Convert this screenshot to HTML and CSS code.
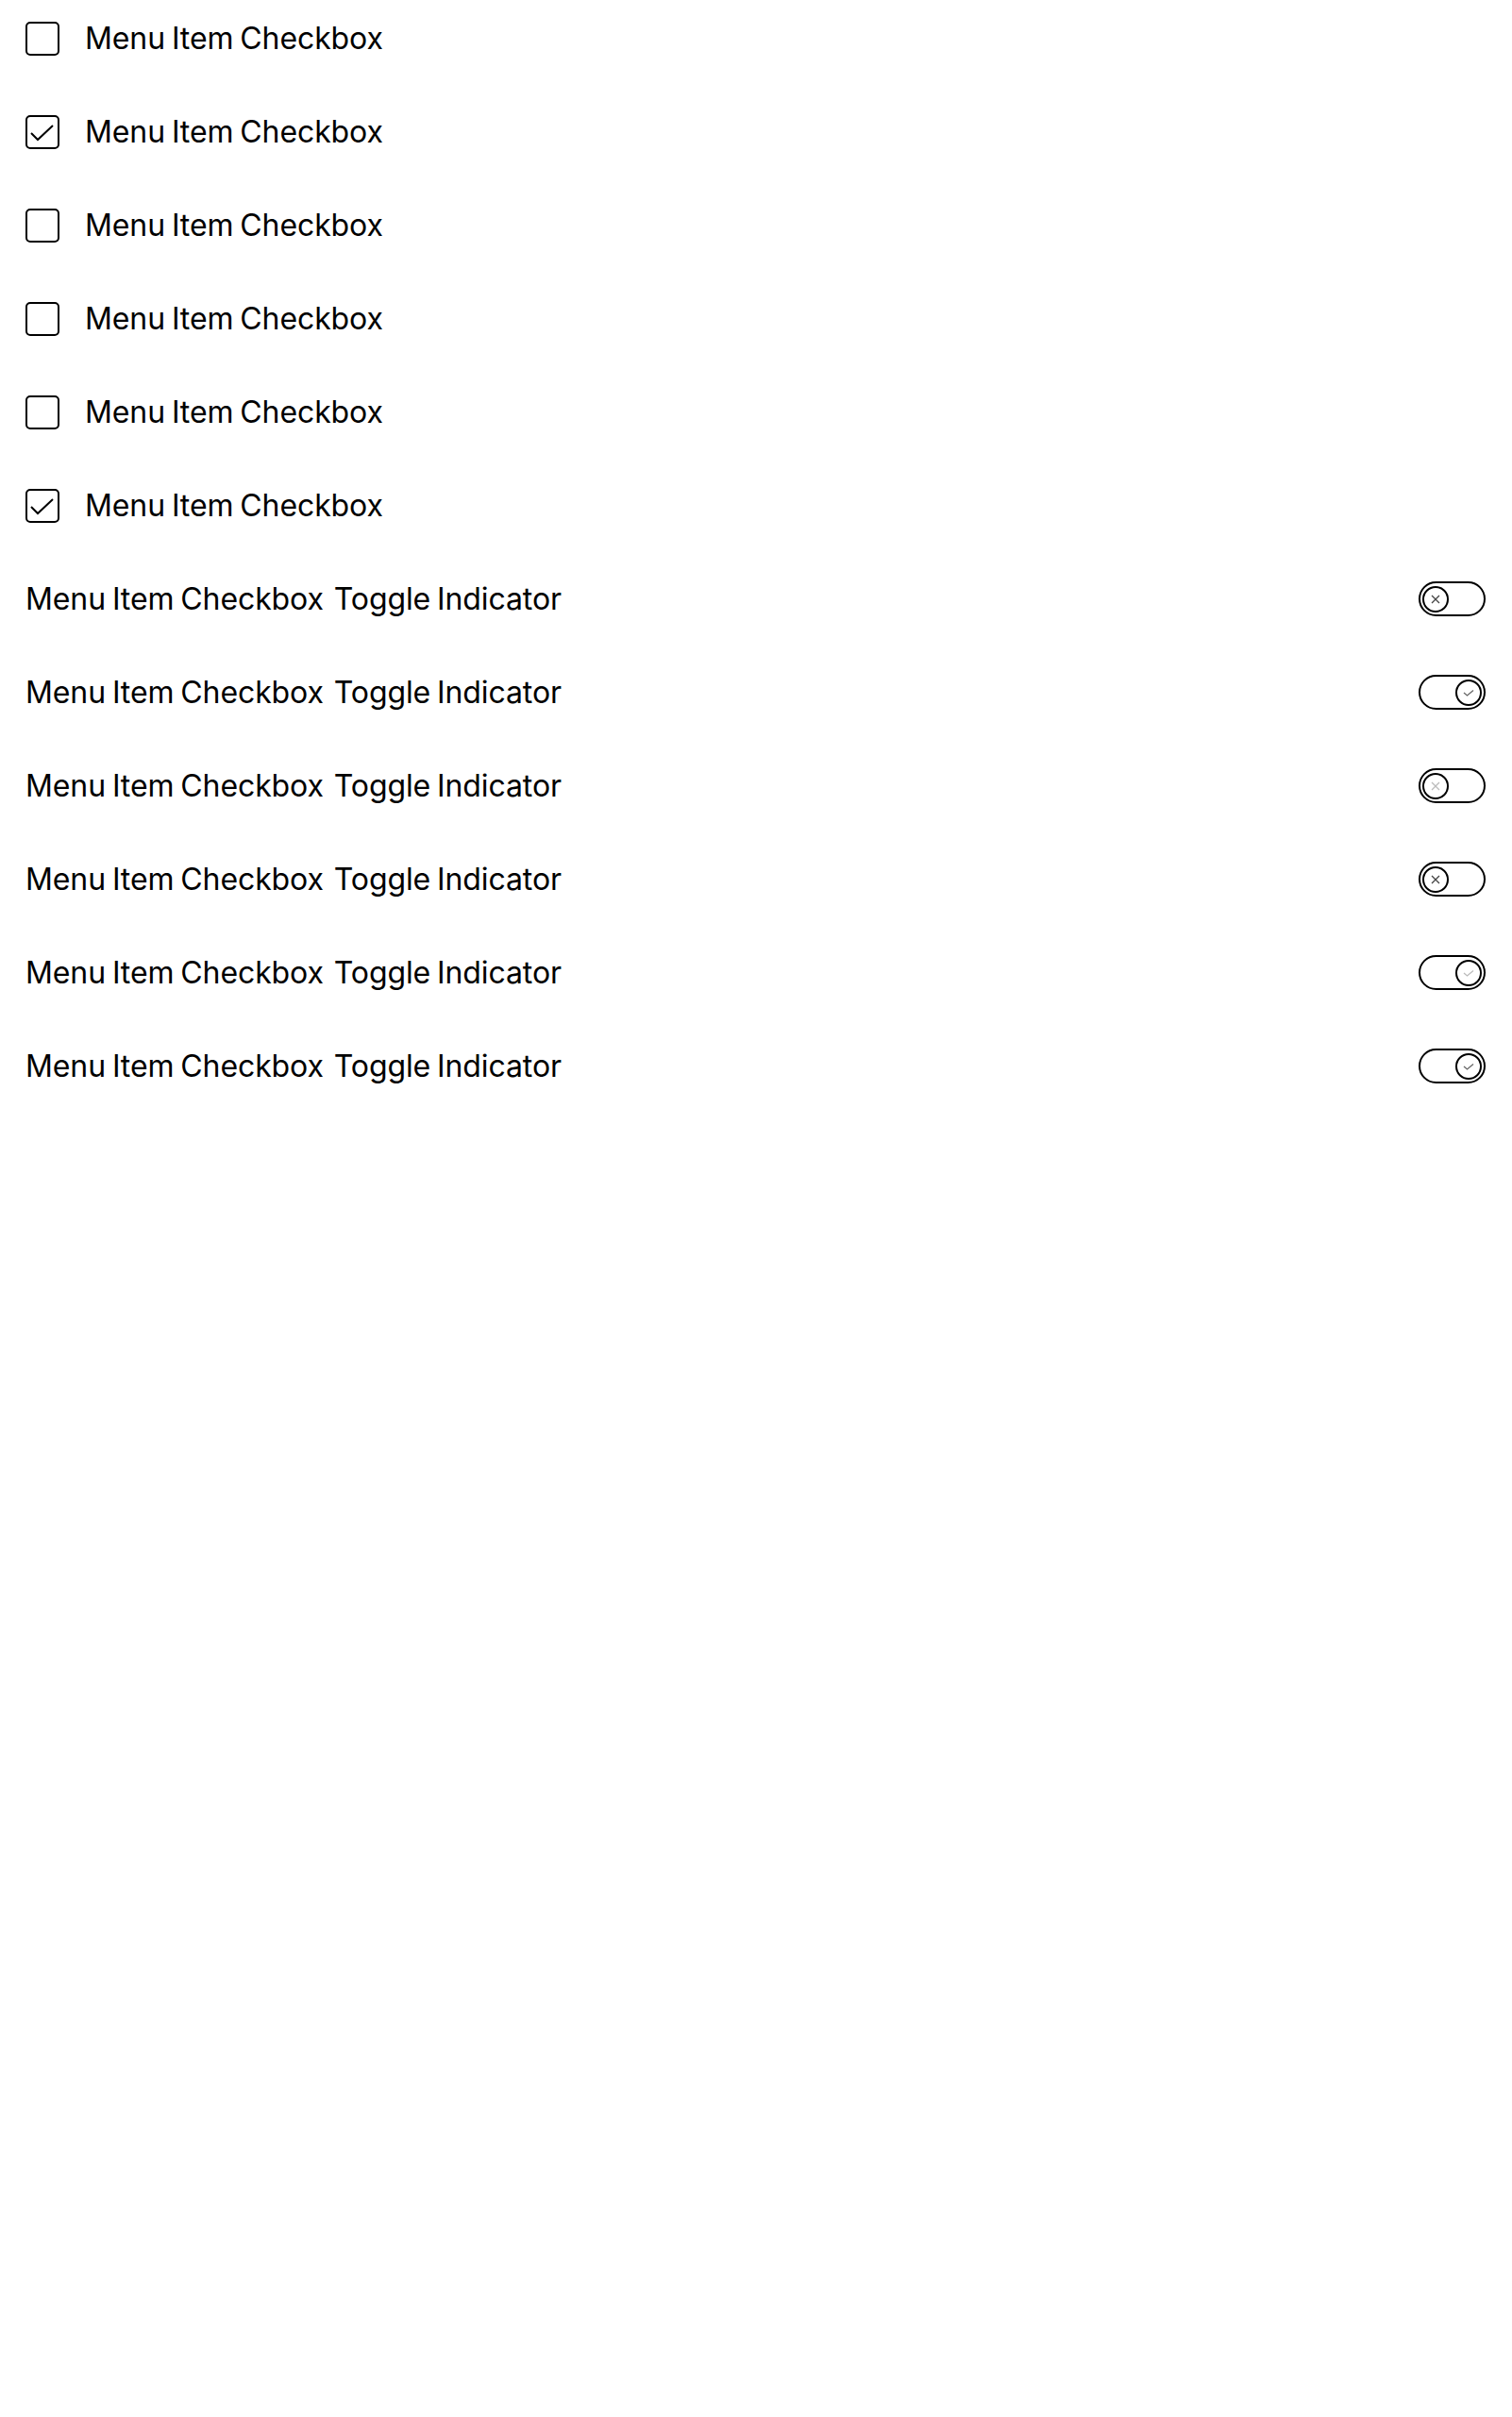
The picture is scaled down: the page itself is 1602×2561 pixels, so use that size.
FILE: index.html
```html
<!DOCTYPE html>
<html>
<head>
<meta charset="utf-8">
<link rel="stylesheet" href="styles.css">
</head>
<body>
<div class="menu">
  <div class="row"><span class="box"></span><span class="label">Menu Item Checkbox</span></div>
  <div class="row"><span class="box"><svg viewBox="0 0 32 32" class="tick"><path d="M4 17 L11 24 L27 9" /></svg></span><span class="label">Menu Item Checkbox</span></div>
  <div class="row"><span class="box"></span><span class="label">Menu Item Checkbox</span></div>
  <div class="row"><span class="box"></span><span class="label">Menu Item Checkbox</span></div>
  <div class="row"><span class="box"></span><span class="label">Menu Item Checkbox</span></div>
  <div class="row"><span class="box"><svg viewBox="0 0 32 32" class="tick"><path d="M4 17 L11 24 L27 9" /></svg></span><span class="label">Menu Item Checkbox</span></div>

  <div class="row toggle-row"><span class="label">Menu Item Checkbox <span class="suffix">Toggle Indicator</span></span>
    <span class="toggle off"><span class="knob"><svg viewBox="0 0 24 24" class="mark dark"><path d="M8 8 L16 16 M16 8 L8 16"/></svg></span></span></div>
  <div class="row toggle-row"><span class="label">Menu Item Checkbox <span class="suffix">Toggle Indicator</span></span>
    <span class="toggle on"><span class="knob"><svg viewBox="0 0 24 24" class="mark mid"><path d="M7 12 L10.5 15 L17 9.5"/></svg></span></span></div>
  <div class="row toggle-row"><span class="label">Menu Item Checkbox <span class="suffix">Toggle Indicator</span></span>
    <span class="toggle off"><span class="knob"><svg viewBox="0 0 24 24" class="mark light"><path d="M8 8 L16 16 M16 8 L8 16"/></svg></span></span></div>
  <div class="row toggle-row"><span class="label">Menu Item Checkbox <span class="suffix">Toggle Indicator</span></span>
    <span class="toggle off"><span class="knob"><svg viewBox="0 0 24 24" class="mark dark"><path d="M8 8 L16 16 M16 8 L8 16"/></svg></span></span></div>
  <div class="row toggle-row"><span class="label">Menu Item Checkbox <span class="suffix">Toggle Indicator</span></span>
    <span class="toggle on"><span class="knob"><svg viewBox="0 0 24 24" class="mark light"><path d="M7 12 L10.5 15 L17 9.5"/></svg></span></span></div>
  <div class="row toggle-row"><span class="label">Menu Item Checkbox <span class="suffix">Toggle Indicator</span></span>
    <span class="toggle on"><span class="knob"><svg viewBox="0 0 24 24" class="mark mid"><path d="M7 12 L10.5 15 L17 9.5"/></svg></span></span></div>
</div>
</body>
</html>
```
FILE: styles.css
```css
html, body {
  margin: 0;
  padding: 0;
  background: #fff;
}
body {
  font-family: Inter, "Noto Sans", sans-serif;
  color: #000;
}
.menu {
  display: flex;
  flex-direction: column;
  gap: 18px;
  padding: 0 28px 0 27px;
}
.row {
  height: 81px;
  display: flex;
  align-items: center;
  gap: 27px;
}
.label {
  font-size: 32px;
  font-weight: 400;
  line-height: 1;
  letter-spacing: -0.1px;
  word-spacing: -2px;
  white-space: pre;
}
.suffix {
  margin-left: 4px;
}
.box {
  width: 36px;
  height: 36px;
  box-sizing: border-box;
  border: 2px solid #000;
  border-radius: 5px;
  display: flex;
  flex: none;
}
.tick {
  width: 32px;
  height: 32px;
}
.tick path {
  fill: none;
  stroke: #000;
  stroke-width: 2;
}
.toggle-row {
  justify-content: space-between;
}
.toggle {
  width: 71px;
  height: 37px;
  box-sizing: border-box;
  border: 2px solid #000;
  border-radius: 20px;
  display: flex;
  align-items: center;
  padding: 0 2px;
  flex: none;
}
.toggle.on {
  justify-content: flex-end;
}
.knob {
  width: 28px;
  height: 28px;
  box-sizing: border-box;
  border: 2px solid #000;
  border-radius: 50%;
  display: flex;
  align-items: center;
  justify-content: center;
}
.mark {
  width: 24px;
  height: 24px;
}
.mark path {
  fill: none;
  stroke-width: 1.3;
}
.mark.dark path { stroke: #444; }
.mark.mid path { stroke: #666; }
.mark.light path { stroke: #bbb; }
```
